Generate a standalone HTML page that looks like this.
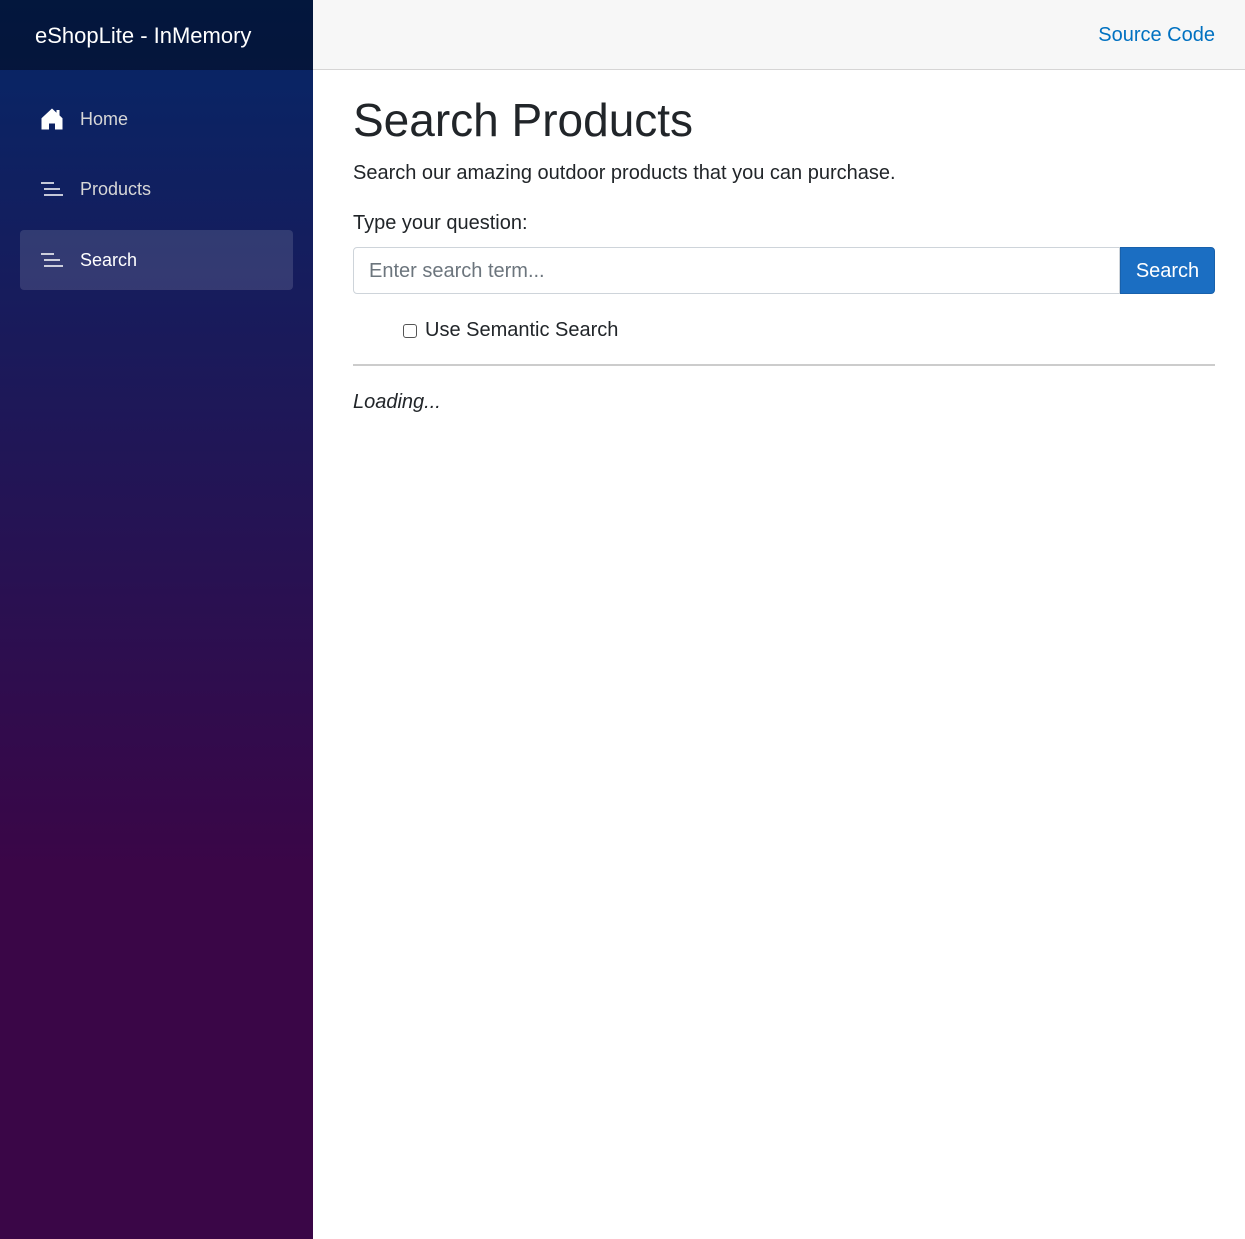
<!DOCTYPE html>
<html><head><meta charset="utf-8"><style>
*{box-sizing:border-box;margin:0;padding:0}
html,body{width:1245px;height:1239px;overflow:hidden;font-family:"Liberation Sans",sans-serif;background:#fff;color:#212529}
.side{position:absolute;left:0;top:0;width:313px;height:1239px;background:linear-gradient(180deg,#052767 0%,#3a0647 70%)}
.brand{height:70px;background:rgba(0,0,0,0.4);color:#fff;font-size:22px;padding-left:35px;line-height:72px}
.item{position:absolute;left:20px;width:273px;height:60px;border-radius:4px;color:#d7d7d7;font-size:18px;display:flex;align-items:center;padding-left:20px}
.item svg{margin-right:16px}
.item.active{background:rgba(255,255,255,0.13);color:#fff}
.top{position:absolute;left:313px;top:0;right:0;height:70px;background:#f7f7f7;border-bottom:1px solid #d6d5d5}
.top a{position:absolute;right:30px;top:24px;color:#0071c1;font-size:20px;text-decoration:none}
.main{position:absolute;left:353px;top:70px;width:862px}
h1{font-size:46px;font-weight:400;margin-top:25px;line-height:50px}
.p1{font-size:20px;margin-top:17px}
.p2{font-size:20px;margin-top:27px}
.grp{display:flex;margin-top:12px;height:47px}
.inp{flex:1;border:1px solid #ced4da;border-radius:4px 0 0 4px;font-size:20px;color:#6c757d;padding:13px 15px;line-height:21px}
.btn{width:95px;background:#1b6ec2;color:#fff;border:1px solid #1861ac;border-radius:0 4px 4px 0;font-size:20px;text-align:center;line-height:47px}
.chk{margin-top:25px;margin-left:50px;font-size:20px;display:flex;align-items:center}
.box{width:14px;height:14px;border:1px solid #555;border-radius:3px;margin-right:8px}
hr{border:0;border-top:2px solid #ccc;margin-top:22px}
.load{font-style:italic;font-size:20px;margin-top:25px}
</style></head><body>
<div class="side">
<div class="brand">eShopLite - InMemory</div>
<div class="item" style="top:89px"><svg width="24" height="24" viewBox="0 0 16 16"><path fill="#fff" d="M8 1 L1 7.5 V15 H6 V11 H10 V15 H15 V7.5 L13 5.6 V2 H11 V3.8 Z"/></svg>Home</div>
<div class="item" style="top:159px"><svg width="24" height="20" viewBox="0 0 24 20"><path stroke="#fff" stroke-width="1.6" d="M1 4H14M4 10H20M4 16H23"/></svg>Products</div>
<div class="item active" style="top:230px"><svg width="24" height="20" viewBox="0 0 24 20"><path stroke="#fff" stroke-width="1.6" d="M1 4H14M4 10H20M4 16H23"/></svg>Search</div>
</div>
<div class="top"><a>Source Code</a></div>
<div class="main">
<h1>Search Products</h1>
<div class="p1">Search our amazing outdoor products that you can purchase.</div>
<div class="p2">Type your question:</div>
<div class="grp"><div class="inp">Enter search term...</div><div class="btn">Search</div></div>
<div class="chk"><div class="box"></div>Use Semantic Search</div>
<hr>
<div class="load">Loading...</div>
</div>
</body></html>
